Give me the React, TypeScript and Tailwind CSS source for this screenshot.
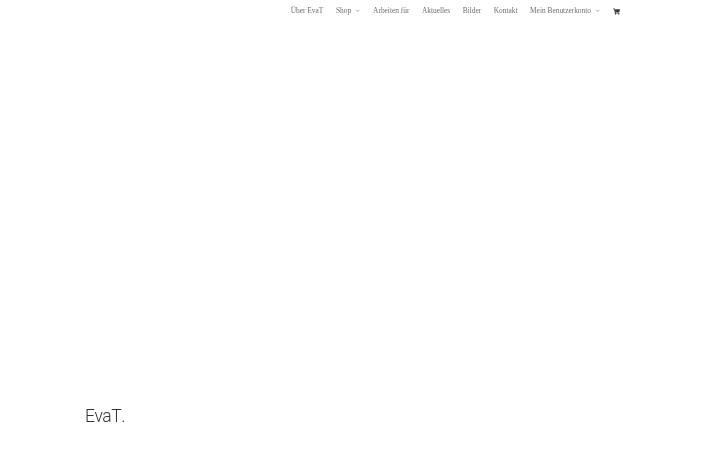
import React from "react";
import { FaShoppingCart } from "react-icons/fa";
import { ChevronDown } from "lucide-react";

type NavItem = { label: string; hasMenu?: boolean };

const navItems: NavItem[] = [
  { label: "Über EvaT" },
  { label: "Shop", hasMenu: true },
  { label: "Arbeiten für" },
  { label: "Aktuelles" },
  { label: "Bilder" },
  { label: "Kontakt" },
  { label: "Mein Benutzerkonto", hasMenu: true },
];

const App: React.FC = () => {
  return (
    <div className="flex flex-col w-full h-[450px] bg-white overflow-hidden">
      <nav className="flex justify-end items-center h-[22px] pr-[100px] gap-[12.5px] font-['Liberation_Serif',serif] text-[7.4px] text-[#707070] [will-change:transform]">
        {navItems.map((item) => (
          <div key={item.label} className="flex items-center gap-1 whitespace-nowrap">
            <span>{item.label}</span>
            {item.hasMenu && <ChevronDown className="w-[5.5px] h-[5.5px] text-[#444444]" strokeWidth={2} />}
          </div>
        ))}
        <FaShoppingCart className="w-[7px] h-[7px] text-[#3a3a3a]" />
      </nav>
      <div className="flex-1 flex items-end pl-[85px] pb-[22px]">
        <p className="font-['Roboto',sans-serif] font-light [font-kerning:none] tracking-[-0.5px] text-[17.5px] leading-[24px] text-[#333333] [will-change:transform]">EvaT.</p>
      </div>
    </div>
  );
};

export default App;
